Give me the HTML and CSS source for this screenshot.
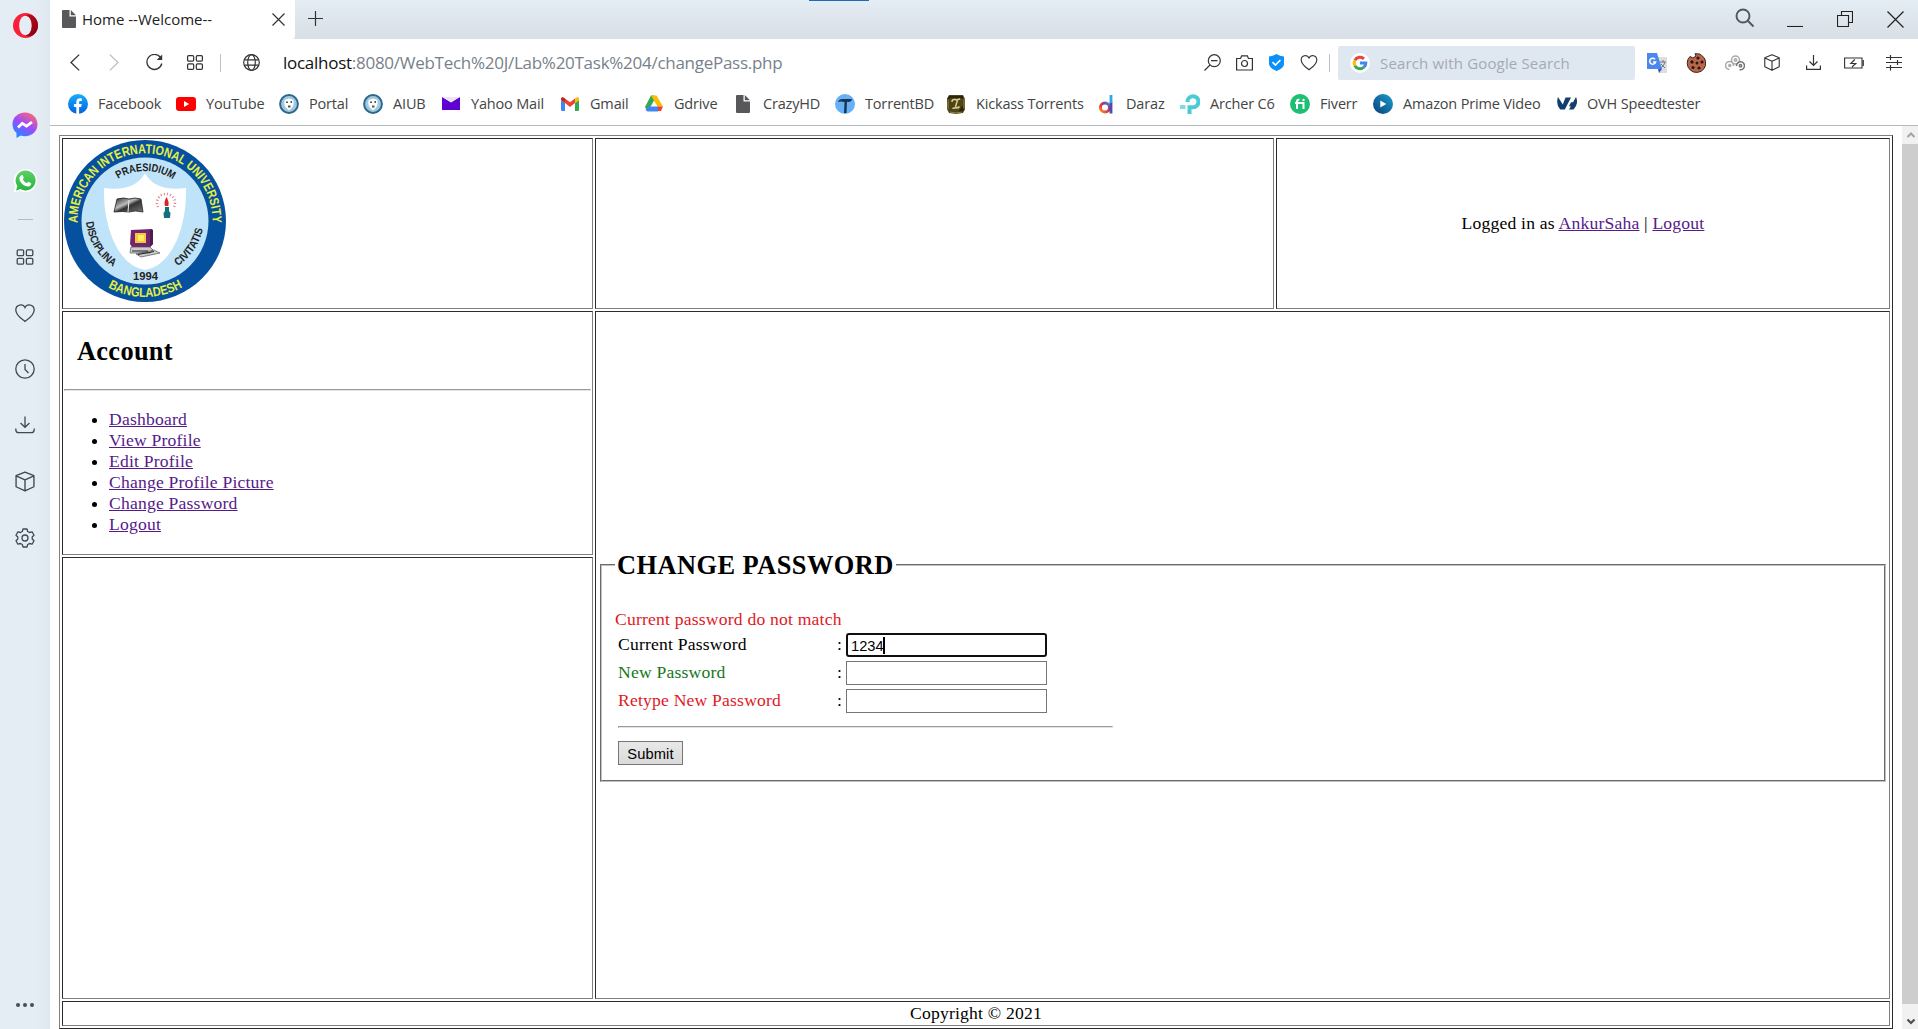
FILE: index.html
```html
<!DOCTYPE html>
<html lang="en">
<head>
<meta charset="utf-8">
<title>Home --Welcome--</title>
<link rel="stylesheet" href="styles.css">
</head>
<body>
<svg class="defs" width="0" height="0" aria-hidden="true">
  <defs>
    <linearGradient id="fb" x1="0" y1="0" x2="0" y2="1"><stop offset="0" stop-color="#18acfe"/><stop offset="1" stop-color="#0163e0"/></linearGradient>
    <linearGradient id="opera-in" x1="0" y1="0" x2="1" y2="1"><stop offset="0" stop-color="#c5101f"/><stop offset="1" stop-color="#7d0010"/></linearGradient>
    <linearGradient id="msg" x1=".2" y1="1" x2=".8" y2="0"><stop offset="0" stop-color="#1292ff"/><stop offset=".5" stop-color="#9a4bff"/><stop offset="1" stop-color="#ff6a6e"/></linearGradient>
    <linearGradient id="wa" x1="0" y1="0" x2="0" y2="1"><stop offset="0" stop-color="#5fd066"/><stop offset="1" stop-color="#27b43e"/></linearGradient>
    <linearGradient id="prime" x1="1" y1="0" x2="0" y2="1"><stop offset="0" stop-color="#1ba0d0"/><stop offset="1" stop-color="#0b3d78"/></linearGradient>
    <linearGradient id="dz" x1="0" y1="1" x2="1" y2="0"><stop offset="0" stop-color="#f1a21b"/><stop offset=".35" stop-color="#e8402c"/><stop offset=".7" stop-color="#8a3fa0"/><stop offset="1" stop-color="#24a5dc"/></linearGradient>
    <linearGradient id="book" x1="0" y1="0" x2="1" y2="1"><stop offset="0" stop-color="#222"/><stop offset=".4" stop-color="#bbb"/><stop offset=".55" stop-color="#333"/><stop offset="1" stop-color="#777"/></linearGradient>
    <radialGradient id="crest-bg"><stop offset=".3" stop-color="#e4f3f8"/><stop offset="1" stop-color="#8fc0d6"/></radialGradient>
    <symbol id="i-grid" viewBox="0 0 20 20"><g fill="none" stroke="currentColor" stroke-width="1.3"><rect x="2.2" y="2.8" width="6.4" height="5.8" rx="1.2"/><rect x="11.4" y="2.8" width="6.4" height="5.8" rx="1.2"/><rect x="2.2" y="11.4" width="6.4" height="5.8" rx="1.2"/><rect x="11.4" y="11.4" width="6.4" height="5.8" rx="1.2"/></g></symbol>
    <symbol id="i-heart" viewBox="0 0 20 20"><path fill="none" stroke="currentColor" stroke-width="1.3" d="M10 18.500C7 16 .8 12.500.8 7 .8 1.500 8 .3 10 4.600 12 .3 19.200 1.500 19.200 7 19.200 12.500 13 16 10 18.500Z"/></symbol>
    <symbol id="i-cube" viewBox="0 0 20 20"><path fill="none" stroke="currentColor" stroke-width="1.3" stroke-linejoin="round" d="M10 1 18.500 4.500V15L10 19 1.500 15V4.500ZM1.500 4.700 10 8.500 18.500 4.700M10 8.500V19"/></symbol>
    <symbol id="i-page" viewBox="0 0 14 18"><path fill="#58585a" d="M1 0H7.500V6.500H14V17a1 1 0 0 1-1 1H1a1 1 0 0 1-1-1V1A1 1 0 0 1 1 0ZM8.800 0 14 5.200H8.800Z"/></symbol>
    <symbol id="i-crest" viewBox="0 0 20 20"><circle cx="10" cy="10" r="8.900" fill="#a9cfdf" stroke="#2b6890" stroke-width="2"/><circle cx="10" cy="10" r="6.800" fill="url(#crest-bg)"/><path fill="#fff" d="M5.500 6 10 4.500 14.500 6Q15.500 12.500 10 16.500 4.500 12.500 5.500 6Z"/><path fill="#555" d="M7 7.500h2v1.500H7ZM11.500 7H13v2h-1.500ZM9 11.500h2.500v2H9Z"/></symbol>
  </defs>
</svg>

<div class="window">
  <aside class="sidebar">
    <div class="side-brand"><svg width="25" height="25" viewBox="0 0 25 25"><path fill="#fa1e38" fill-rule="evenodd" d="M12.500 0a12.500 12.500 0 1 0 0 25 12.500 12.500 0 1 0 0-25ZM12.500 2.800c3.600 0 6.300 4 6.300 9.700s-2.700 9.700-6.300 9.700-6.300-4-6.300-9.700 2.700-9.700 6.300-9.700Z"/><path fill="url(#opera-in)" d="M12.500 2.800c3.600 0 6.300 4 6.300 9.700s-2.700 9.700-6.300 9.700c1.700 1.800 5.500 1.600 8.500-1 5.300-4.600 5.300-13 0-17.500-3-2.500-6.600-2.700-8.500-.9Z"/></svg></div>
    <div class="side-item"><svg width="26" height="26" viewBox="0 0 26 26"><path fill="url(#msg)" d="M13 .5C5.800.5.500 5.600.500 12.300c0 3.600 1.500 6.700 4 8.800V26l4.200-2.400c1.300.4 2.800.6 4.300.6 7.200 0 12.500-5.200 12.500-11.900S20.200.500 13 .5Z"/><path fill="none" stroke="#fff" stroke-width="2.800" stroke-linejoin="round" d="m6 15.500 4.300-4.200 4.200 2.900 5.500-4.200"/></svg></div>
    <div class="side-item"><svg width="24" height="24" viewBox="0 0 24 24"><path fill="#fff" d="M12.500 0a11.500 11.500 0 0 1 0 23c-2 0-4-.5-5.500-1.500L.500 23.500l2-6A11.500 11.500 0 0 1 12.500 0Z"/><path fill="url(#wa)" d="M12.500 1.500a10 10 0 1 1-5 18.600L3 21.500l1.400-4.300A10 10 0 0 1 12.500 1.500Z"/><path fill="#fff" d="M8.300 6.200c.7-.5 1.300-.3 1.600.4l.8 2c.2.500-.7 1.300-.9 1.600.9 1.900 2.300 3.200 4.300 4 .5-.4 1-1.600 1.600-1.300l2.100 1c.6.300.4 1.600-.1 2.300-2.200 2.600-6.300.6-8.400-1.300-2.200-2-4.700-6.300-1-8.700Z"/></svg></div>
    <div class="side-rule"></div>
    <div class="side-item"><svg width="22" height="20"><use href="#i-grid"/></svg></div>
    <div class="side-item"><svg width="20" height="20"><use href="#i-heart"/></svg></div>
    <div class="side-item"><svg width="20" height="20" viewBox="0 0 20 20"><g fill="none" stroke="currentColor" stroke-width="1.3"><circle cx="10" cy="10" r="9.200"/><path d="M10 5v5.500l3.500 3.500"/></g></svg></div>
    <div class="side-item"><svg width="20" height="20" viewBox="0 0 20 20"><path fill="none" stroke="currentColor" stroke-width="1.3" d="M10 .5v10.500M5.500 7 10 11.300 14.500 7M.8 12.500v1.200q0 3 3 3h12.400q3 0 3-3v-1.200"/></svg></div>
    <div class="side-item"><svg width="22" height="21"><use href="#i-cube"/></svg></div>
    <div class="side-item"><svg width="20" height="20" viewBox="0 0 20 20"><g fill="none" stroke="currentColor" stroke-width="1.300" stroke-linejoin="round"><path d="M8 1h4l.7 2.500 1.800 1 2.600-.7 1.900 3.400L17.200 9v2l1.800 1.800-1.900 3.400-2.600-.7-1.800 1L12 19H8l-.7-2.500-1.800-1-2.600.7L1 12.800 2.800 11V9L1 7.200l1.900-3.400 2.600.7 1.800-1Z"/><circle cx="10" cy="10" r="3"/></g></svg></div>
    <div class="side-more"><i></i><i></i><i></i></div>
  </aside>

  <div class="main">
    <header class="tabs">
      <div class="tab">
        <svg width="14" height="18"><use href="#i-page"/></svg>
        <span class="tab-title">Home --Welcome--</span>
        <svg width="13" height="13" viewBox="0 0 13 13"><path stroke="#333" stroke-width="1.200" d="m.5.500 12 12m0-12-12 12"/></svg>
      </div>
      <svg class="plus" width="15" height="15" viewBox="0 0 15 15"><path stroke="#333" stroke-width="1.200" d="M7.500 0v15M0 7.500h15"/></svg>
      <span class="marker"></span>
      <div class="win-buttons">
        <svg width="20" height="20" viewBox="0 0 20 20"><g fill="none" stroke="#4d5866" stroke-width="1.900"><circle cx="8" cy="8" r="6.500"/><path d="m12.500 12.500 6 6"/></g></svg>
        <svg width="16" height="16" viewBox="0 0 16 16"><path stroke="#222" stroke-width="1.100" d="M0 15.500h16"/></svg>
        <svg width="16" height="16" viewBox="0 0 16 16"><path fill="none" stroke="#222" stroke-width="1.100" d="M.5 4.500h11v11H.5ZM4.500 4.500v-4h11v11h-4"/></svg>
        <svg width="17" height="17" viewBox="0 0 17 17"><path stroke="#222" stroke-width="1.200" d="m.5.500 16 16m0-16-16 16"/></svg>
      </div>
    </header>

    <div class="toolbar">
      <div class="nav">
        <svg width="10" height="17" viewBox="0 0 10 17"><path fill="none" stroke="#333" stroke-width="1.300" d="M9.200.600 1 8.500l8.200 7.900"/></svg>
        <svg width="10" height="17" viewBox="0 0 10 17"><path fill="none" stroke="#bbb" stroke-width="1.200" d="M.8.600 9 8.500.8 16.400"/></svg>
        <svg width="17" height="17" viewBox="0 0 17 17"><path fill="none" stroke="#333" stroke-width="1.300" d="M14.500 3.500A7.500 7.500 0 1 0 15.800 9.500"/><path fill="#333" d="M16.200.5V6h-5.500Z"/></svg>
        <svg width="20" height="19"><use href="#i-grid"/></svg>
      </div>
      <span class="divider"></span>
      <svg class="globe" width="17" height="17" viewBox="0 0 17 17"><g fill="none" stroke="#333" stroke-width="1.200"><circle cx="8.500" cy="8.500" r="7.800"/><ellipse cx="8.500" cy="8.500" rx="3.800" ry="7.800"/><path d="M1.300 5.800h14.400M1.300 11.200h14.400"/></g></svg>
      <div class="url"><b>localhost</b>:8080/WebTech%20J/Lab%20Task%204/changePass.php</div>
      <div class="page-tools">
        <svg width="17" height="17" viewBox="0 0 17 17"><g fill="none" stroke="#333" stroke-width="1.200"><circle cx="10.300" cy="6.700" r="6"/><path d="M7 6.700h6.500M6 11 .5 16.500"/></g></svg>
        <svg width="17" height="16" viewBox="0 0 17 16"><g fill="none" stroke="#333" stroke-width="1.200"><path d="M.6 3.500h4l1-2.700h5.800l1 2.700h4v11.500H.6Z"/><circle cx="8.500" cy="8.500" r="3"/></g></svg>
        <svg width="15" height="17" viewBox="0 0 15 17"><path fill="#0a90fb" d="M7.500 0Q11 2 15 2.500V10q0 4-7.500 7Q0 14 0 10V2.500Q4 2 7.500 0Z"/><path fill="none" stroke="#fff" stroke-width="1.700" d="m3.500 8.200 2.900 2.800 5-5"/></svg>
        <svg width="18" height="17"><use href="#i-heart"/></svg>
      </div>
      <span class="divider"></span>
      <div class="search">
        <svg width="20" height="20" viewBox="0 0 20 20"><circle cx="10" cy="10" r="10" fill="#fff"/><g fill="none" stroke-width="3"><path stroke="#ea4335" d="M4.900 7.300A5.800 5.800 0 0 1 14 5.800"/><path stroke="#fbbc05" d="M4.900 12.700a5.800 5.800 0 0 1 0-5.400"/><path stroke="#34a853" d="M13.700 14.400a5.800 5.800 0 0 1-8.800-1.700"/><path stroke="#4285f4" d="M10 10.100h5.800a5.800 5.800 0 0 1-2.100 4.300"/></g></svg>
        <span>Search with Google Search</span>
      </div>
      <div class="extensions">
        <svg width="20" height="20" viewBox="0 0 20 20"><path fill="#dcdee2" d="M9 4h11v16h-8Z"/><path stroke="#6b7a88" fill="none" d="M13 9h6m-3-2v2m2 0q-1 4-4 6m0-4 4 4"/><path fill="#3a4fc0" d="M11 16h4l-3 4Z"/><path fill="#4b87ee" d="M0 0h10l5 16H0Z"/><path fill="none" stroke="#fff" stroke-width="1.500" d="M8 6.200A3 3 0 1 0 8.600 9H6"/></svg>
        <svg width="20" height="20" viewBox="0 0 20 20"><path fill="#b8694c" stroke="#3d221c" d="M9 .7 10 3l-3 2-3-1.500A9.300 9.300 0 1 0 15.500 2.300L13.500 1Z"/><g fill="#2c1512"><circle cx="12" cy="5" r="1.600"/><circle cx="6" cy="9" r="1.700"/><circle cx="11" cy="10" r="1.500"/><circle cx="16" cy="9" r="1.600"/><circle cx="7" cy="14.500" r="1.600"/><circle cx="13" cy="15" r="1.600"/></g></svg>
        <svg width="20" height="16" viewBox="0 0 20 16"><g fill="none" stroke-width="1.500"><g stroke="#aaa"><circle cx="10.500" cy="5" r="4"/><circle cx="10.500" cy="5" r="1.200"/><path d="M4.500 14.500A4 4 0 1 1 8.500 11"/><circle cx="4.800" cy="10.500" r="1"/></g><g stroke="#777"><path d="M11.500 11a4 4 0 1 1 3 3.700"/><circle cx="15.500" cy="10.800" r="1.200"/></g></g></svg>
        <svg width="18" height="17"><use href="#i-cube"/></svg>
        <svg width="15" height="15" viewBox="0 0 15 15"><path fill="none" stroke="#333" stroke-width="1.200" d="M7.500 0v10M3.500 6.500l4 4 4-4M.6 10.500v3.800h13.800v-3.800"/></svg>
        <svg width="20" height="12" viewBox="0 0 20 12"><path fill="none" stroke="#333" stroke-width="1.100" d="M.6 1h17.400v10H.6ZM19.300 3v6M10.800 2.500 6.800 6.500h5L8 10"/></svg>
        <svg width="16" height="16" viewBox="0 0 16 16"><path fill="none" stroke="#333" stroke-width="1.200" d="M0 2.500h16M0 7.500h16M0 12.500h16M4.500 0v5M11.500 5v5M4.500 10v5.500"/></svg>
      </div>
    </div>

    <nav class="bookmarks">
      <a><svg width="20" height="20" viewBox="0 0 20 20"><circle cx="10" cy="10" r="10" fill="url(#fb)"/><path fill="#fff" d="M8.300 20v-7H5.900v-3h2.400V8.200c0-2.700 1.400-4 3.700-4 .7 0 1.300.1 1.800.2v2.500h-1.300c-1 0-1.400.5-1.400 1.400V10h2.600l-.5 3h-2.100v7Z"/></svg><span>Facebook</span></a>
      <a><svg width="20" height="14" viewBox="0 0 20 14"><rect width="20" height="14" rx="3.200" fill="#f00"/><path fill="#fff" d="m8 4 5.200 3L8 10Z"/></svg><span>YouTube</span></a>
      <a><svg width="20" height="20"><use href="#i-crest"/></svg><span>Portal</span></a>
      <a><svg width="20" height="20"><use href="#i-crest"/></svg><span>AIUB</span></a>
      <a><svg width="20" height="13" viewBox="0 0 20 13"><path fill="#5f01d1" d="M1 0 10 5.500 19 0v13H1Z"/><path fill="#ece2fa" d="M1.500 0h17L10 4.800Z"/></svg><span>Yahoo Mail</span></a>
      <a><svg width="20" height="14" viewBox="0 0 20 14"><path fill="#4285f4" d="M1 3 5 6v8H2a1 1 0 0 1-1-1Z"/><path fill="#34a853" d="M19 3 15 6v8h3a1 1 0 0 0 1-1Z"/><path fill="#ea4335" d="M5 1.500 10 5.300 15 1.500V6l-5 4-5-4Z"/><path fill="#c5221f" d="M1 2C1 0 3-.3 5 1.500V6L1 3Z"/><path fill="#fbbc04" d="M19 2c0-2-2-2.300-4-.5V6l4-3Z"/></svg><span>Gmail</span></a>
      <a><svg width="20" height="17" viewBox="0 0 20 17"><path fill="#34a853" d="M7 .5h3.500l-.5 5L5 14.500 3 15.500 1 12Z"/><path fill="#fbbc04" d="M7 .5h5.500L19 11.500h-5.500Z"/><path fill="#4285f4" d="M4.500 11.500H14v5H3.500L1.500 15Z"/><path fill="#ea4335" d="M13.500 11.500H19L17 16h-3Z"/></svg><span>Gdrive</span></a>
      <a><svg width="20" height="18" viewBox="0 0 20 18"><use href="#i-page" x="3" width="14" height="18"/></svg><span>CrazyHD</span></a>
      <a><svg width="20" height="20" viewBox="0 0 20 20"><circle cx="10" cy="10" r="10" fill="#66b0f4"/><path fill="#183457" d="M3 8Q4 4.800 8 5h9q-.5 3-3.500 3l-1.500-.2L11.500 19H9L9.500 8Q5.500 7 3 8Z"/></svg><span>TorrentBD</span></a>
      <a><svg width="20" height="20" viewBox="0 0 20 20"><path fill="#4d4519" d="M3 1h14l2 4v10l-2 4-7 1-7-1-2-4V5Z"/><path fill="#2a240d" d="M3 2h14v3l-2-1H4L1 9V5ZM16 12l3 3-4 4-2-2Z"/><path fill="none" stroke="#dccf87" stroke-width="1.500" d="M6 8q0-3 3-2.500 3 .8 5-.8M11.500 6 9.500 13q-1 2-3 1m3 0q3 .2 4-1.500"/><path fill="none" stroke="#958846" d="M2 5v10M18 5v10M4 18q6 2 12 0"/></svg><span>Kickass Torrents</span></a>
      <a><svg width="20" height="20" viewBox="0 0 20 20"><circle cx="9" cy="13.500" r="4.600" fill="none" stroke="url(#dz)" stroke-width="3"/><path stroke="#5b45a5" stroke-width="2.800" d="M15 8v11.500"/><path stroke="#2da9df" stroke-width="2.800" d="M15 1v8"/></svg><span>Daraz</span></a>
      <a><svg width="20" height="20" viewBox="0 0 20 20"><g fill="none" stroke="#4acbd6" stroke-width="4"><path d="M7.500 8a5.500 5.500 0 1 1 5.500 5.200H9.500V20"/><path stroke="#7fdce2" d="M0 13h5.500"/></g></svg><span>Archer C6</span></a>
      <a><svg width="20" height="20" viewBox="0 0 20 20"><circle cx="10" cy="10" r="10" fill="#1dbf73"/><path fill="none" stroke="#fff" stroke-width="2" d="M7 15V7.500q0-2 2.500-2M5 9h8.500v6"/><circle cx="13.500" cy="6" r="1.200" fill="#fff"/></svg><span>Fiverr</span></a>
      <a><svg width="20" height="20" viewBox="0 0 20 20"><circle cx="10" cy="10" r="10" fill="url(#prime)"/><path fill="#fff" d="m7.300 6.500 6 3.500-6 3.500Z"/></svg><span>Amazon Prime Video</span></a>
      <a><svg width="20" height="13" viewBox="0 0 20 13"><path fill="#123f6d" d="M1 0 5.800 7.500 8.500.500H14L7.800 12.500H3.200Q-1.500 7 1 0ZM19 0Q22 7 16.500 12.500H12l1.800-3.300H12l2-4h2Z"/></svg><span>OVH Speedtester</span></a>
    </nav>

    <div class="viewport">
      <div class="page">
        <div class="layout">
          <div class="cell logo-cell">
            <svg class="crest" width="162" height="162" viewBox="-81 -81 162 162">
              <circle r="81" fill="#05509f"/><circle r="63.500" fill="#bfe3f8"/>
              <path fill="#fff" d="M0-48Q-10-29-41-33-42-6-32 19-20 46 0 49 20 46 32 19 42-6 41-33 10-29 0-48Z"/>
              <path id="arc-out" fill="none" d="M-67.300 5a67.500 67.500 0 1 1 134.600 0"/>
              <path id="arc-low" fill="none" d="M-76 0a76 76 0 0 0 152 0"/>
              <path id="arc-in" fill="none" d="M-50 0a50 50 0 0 1 100 0"/>
              <path id="arc-inlow" fill="none" d="M-59-4a59 59 0 0 0 118 0"/>
              <g class="crest-ring">
                <text><textPath href="#arc-out" startOffset="3" textLength="216" lengthAdjust="spacingAndGlyphs">AMERICAN INTERNATIONAL UNIVERSITY</textPath></text>
                <text><textPath href="#arc-low" startOffset="80.500" textLength="78" lengthAdjust="spacingAndGlyphs">BANGLADESH</textPath></text>
              </g>
              <g class="crest-motto">
                <text><textPath href="#arc-in" startOffset="50" textLength="58" lengthAdjust="spacingAndGlyphs">PRAESIDIUM</textPath></text>
                <text><textPath href="#arc-inlow" startOffset="5" textLength="54" lengthAdjust="spacingAndGlyphs">DISCIPLINA</textPath></text>
                <text><textPath href="#arc-inlow" startOffset="127" textLength="46" lengthAdjust="spacingAndGlyphs">CIVITATIS</textPath></text>
                <text x="-12" y="59" textLength="25" lengthAdjust="spacingAndGlyphs">1994</text>
              </g>
              <path fill="url(#book)" stroke="#222" stroke-width=".8" d="M-28-22q7-2 12 0 6-2 12 0l2 13q-8-2-14 0-6-1-15 0Z"/><path stroke="#eee" d="m-16-21-1 12"/>
              <g fill="none" stroke="#e67a86" stroke-width="2.500" stroke-dasharray="1 2.200"><path d="M13-14a9 9 0 1 1 16 0"/></g>
              <path fill="#e41d2c" d="M21.500-24q3 5 1.800 9h-3.300q-1.500-4 1.500-9Z"/><path fill="#16717f" d="M20-14h4v4l1.500 2-.5 5h-6l-.5-5 1.500-2Z"/>
              <path fill="#742572" d="m-14 9 20-1 2 1v14l-3 3h-18l-2-3Z"/><path fill="#4d1d50" d="m5 8 3 1v14l-3 3Z"/><path fill="#f3c83d" d="M-10 12H1v10h-11Z"/><path fill="#ffec62" d="M-7 14h6v6h-6Z"/>
              <path fill="#ccc" stroke="#555" stroke-width=".7" d="M-14 26H5l3 3-3 3h-20ZM-9 33l18-4 6 3-19 4Z"/><path stroke="#222" d="M-13 30H3M-7 33.500l16-3"/>
            </svg>
          </div>
          <div class="cell"></div>
          <div class="cell login-cell"><p>Logged in as <a href="#">AnkurSaha</a> | <a href="#">Logout</a></p></div>

          <div class="cell menu-cell">
            <h2>Account</h2>
            <hr>
            <ul>
              <li><a href="#">Dashboard</a></li>
              <li><a href="#">View Profile</a></li>
              <li><a href="#">Edit Profile</a></li>
              <li><a href="#">Change Profile Picture</a></li>
              <li><a href="#">Change Password</a></li>
              <li><a href="#">Logout</a></li>
            </ul>
          </div>
          <div class="cell content-cell">
            <fieldset>
              <legend>CHANGE PASSWORD</legend>
              <p class="error">Current password do not match</p>
              <form class="form">
                <div class="row"><label>Current Password</label><span>:</span><div class="field focused">1234<i></i></div></div>
                <div class="row new"><label>New Password</label><span>:</span><div class="field"></div></div>
                <div class="row retype"><label>Retype New Password</label><span>:</span><div class="field"></div></div>
                <hr>
                <button type="button">Submit</button>
              </form>
            </fieldset>
          </div>
          <div class="cell"></div>
          <footer class="cell footer-cell">Copyright © 2021</footer>
        </div>
      </div>
      <div class="scrollbar">
        <svg width="16" height="18" viewBox="0 0 16 18"><path fill="none" stroke="#a3a3a3" stroke-width="2" d="m5.500 11 3.500-3.500 3.500 3.500"/></svg>
        <div class="thumb"></div>
        <svg width="16" height="25" viewBox="0 0 16 25"><path fill="none" stroke="#505050" stroke-width="2.200" d="m5.500 15.500 3.500 3.500 3.500-3.500"/></svg>
      </div>
    </div>
  </div>
</div>
</body>
</html>
```

FILE: styles.css
```css
* { box-sizing: border-box; }
body { margin: 0; background: #fff; overflow: hidden; }
svg { display: block; flex: none; }
.defs { position: absolute; }
.window { display: flex; width: 1918px; height: 1029px; font-family: "Open Sans", "Noto Sans", sans-serif; }

/* Sidebar */
.sidebar { width: 50px; flex: none; display: flex; flex-direction: column; color: #3f4954; background: linear-gradient(90deg, #e4ecf4 36px, #dfe7ef); }
.side-brand { height: 97px; padding: 13px 0 0 13px; }
.side-item { height: 56.3px; display: flex; align-items: center; justify-content: center; padding-right: 1px; }
.side-rule { height: 1px; width: 15px; margin: 9px 0 9px 18px; background: #b3bcc4; }
.side-more { margin: auto 0 22px 16px; display: flex; gap: 3px; }
.side-more i { width: 4px; height: 4px; border-radius: 50%; background: #444d58; }

/* Tab strip */
.main { width: 1868px; display: flex; flex-direction: column; }
.tabs { height: 39px; flex: none; display: flex; background: linear-gradient(#e4ecf4, #d8dfe6); }
.tab { width: 245px; background: #fff; display: flex; align-items: center; padding: 0 10px 1px 12px; border-radius: 0 0 3px 0; }
.tab-title { margin-left: 6px; flex: 1; font-size: 15px; color: #222; }
.plus { margin: 11px 0 0 13px; }
.marker { width: 60px; height: 1px; margin-left: 486px; background: #1b6cb4; }
.win-buttons { margin-left: auto; display: grid; grid-template-columns: 50px 50px 50px 17px; padding: 9px 15px 0 0; }
.win-buttons svg + svg { margin-top: 2px; margin-left: 1px; }
.win-buttons svg:first-child { margin-left: -1px; margin-top: -1px; }

/* Address bar */
.toolbar { height: 47px; flex: none; display: flex; align-items: center; color: #333; padding-left: 5px; }
.nav { display: grid; grid-template-columns: 39px 40px 41px 40px; justify-items: center; align-items: center; margin-right: 5px; }
.divider { width: 1px; height: 18px; background: #bcc2c8; }
.globe { margin: 0 23px 0 22px; }
.url { width: 913px; font-size: 17px; letter-spacing: -.27px; color: #78818b; white-space: nowrap; }
.url b { font-weight: 400; color: #111; }
.page-tools { display: grid; grid-template-columns: 32px 32px 33px 32px; justify-items: center; align-items: center; margin-right: 4px; }
.search { width: 297px; height: 34px; margin: 0 2px 0 8px; background: #dfe7f1; border-radius: 2px; display: flex; align-items: center; gap: 10px; padding: 0 12px; font-size: 15px; letter-spacing: .16px; color: #a4aab1; white-space: nowrap; }
.extensions { display: grid; grid-template-columns: 40px 38px 40px 34px 48px 34px 46px; justify-items: center; align-items: center; }

/* Bookmarks */
.bookmarks { height: 40px; flex: none; display: grid; grid-template-columns: 108px 103px 84px 78px 119px 84px 89px 102px 111px 150px 84px 110px 83px 184px 160px; padding: 0 0 4px 18px; border-bottom: 1px solid #b4bbc0; }
.bookmarks a { display: flex; align-items: center; gap: 10px; font-size: 14.500px; letter-spacing: -.17px; color: #444; white-space: nowrap; }

/* Web page */
.viewport { height: 903px; display: flex; }
.page { width: 1852px; padding: 9px; font: 17.600px/21px "Liberation Serif", serif; letter-spacing: .2px; color: #000; }
.page a { color: #551a8b; text-decoration: underline; }
.layout { width: 1834px; height: 894px; display: grid; grid-template-columns: 531px 679px 614px; grid-template-rows: 171px 244px 442px 25px; gap: 2px; padding: 2px; border: 1px solid; border-color: #808080 #2c2c2c #2c2c2c #808080; }
.cell { border: 1px solid; border-color: #2c2c2c #808080 #808080 #2c2c2c; padding: 1px; min-width: 0; }
.page p { margin: 0; }
.login-cell { display: flex; align-items: center; justify-content: center; }
.crest text { letter-spacing: 0; }
.crest-ring { font: bold 13px "Liberation Sans Narrow", "Liberation Sans", sans-serif; fill: #e7ef3f; }
.crest-motto { font: bold 11px "Liberation Sans Narrow", "Liberation Sans", sans-serif; fill: #222; }
.page hr { margin: 0; border: 1px solid; border-color: #9a9a9a #e4e4e4 #e4e4e4 #9a9a9a; height: 2px; }
.menu-cell h2 { margin: 0; padding: 23px 0 0 13px; height: 76px; font-size: 26.400px; line-height: 30px; letter-spacing: .3px; }
.menu-cell ul { margin: 18px 0 0; padding-left: 45px; }
.content-cell { grid-column: 2 / 4; grid-row: 2 / 4; padding: 238px 3px 0 4px; }
fieldset { margin: 0; padding: 0 13px 0 13px; border: 2px groove #c0c0c0; height: 232px; }
legend { padding: 0 2px; font-size: 26.400px; line-height: 30px; font-weight: bold; letter-spacing: .45px; }
.error { color: #e0191f; padding-top: 29px; }
.form { margin: 3px 0 0 3px; width: 495px; }
.row { display: grid; grid-template-columns: 219px 9px 201px; height: 24px; margin-bottom: 4px; line-height: 22px; }
.new label { color: #14781a; }
.retype label { color: #e0191f; }
.field { border: 1px solid #767676; display: flex; align-items: center; padding: 0 4px; font: 14.670px "Liberation Sans", sans-serif; letter-spacing: 0; }
.field.focused { border: 2px solid #101010; border-radius: 3px; padding: 2px 3px 0; }
.field i { width: 2px; height: 17px; margin: -2px 0 0 -1px; background: #000; }
.form hr { margin-top: 13px; }
button { display: block; margin-top: 13px; width: 65px; height: 24px; padding: 1px 0 0; border: 1px solid #767676; background: linear-gradient(#e8e8e8, #dadada); font: 14.670px "Liberation Sans", sans-serif; letter-spacing: .15px; color: #000; }
.footer-cell { grid-column: 1 / 4; text-align: center; }

/* Scrollbar */
.scrollbar { width: 16px; display: flex; flex-direction: column; background: #f1f1f1; }
.thumb { flex: 1; background: #cdcdcd; }
```
